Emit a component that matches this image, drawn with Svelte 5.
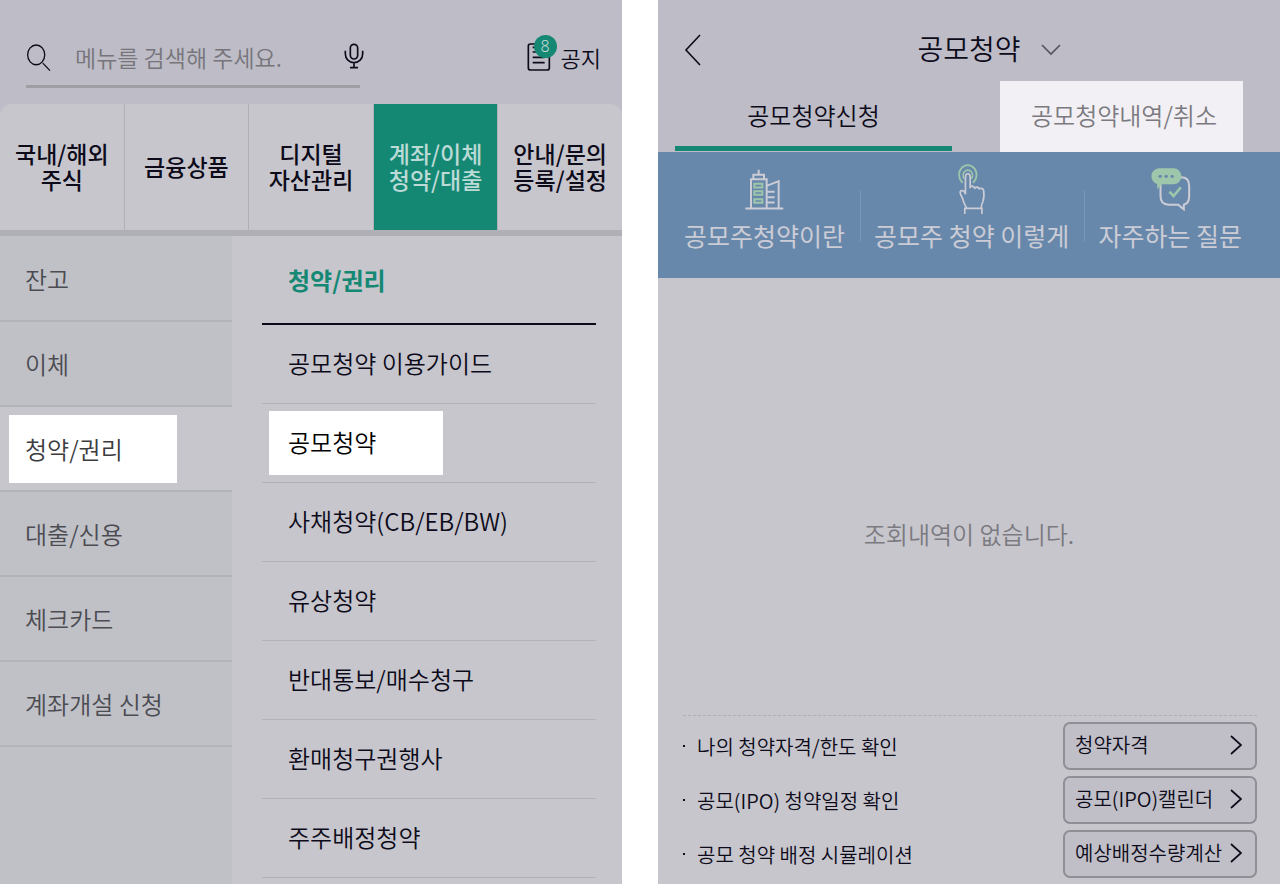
<script lang="ts">
  const categories: { label: string; active?: boolean }[] = [
    { label: '국내/해외\n주식' },
    { label: '금융상품' },
    { label: '디지털\n자산관리' },
    { label: '계좌/이체\n청약/대출', active: true },
    { label: '안내/문의\n등록/설정' },
  ];

  const groups = ['잔고', '이체', '청약/권리', '대출/신용', '체크카드', '계좌개설 신청'];

  const menus = [
    '공모청약 이용가이드',
    '공모청약',
    '사채청약(CB/EB/BW)',
    '유상청약',
    '반대통보/매수청구',
    '환매청구권행사',
    '주주배정청약',
  ];

  const links: { text: string; button: string }[] = [
    { text: '나의 청약자격/한도 확인', button: '청약자격' },
    { text: '공모(IPO) 청약일정 확인', button: '공모(IPO)캘린더' },
    { text: '공모 청약 배정 시뮬레이션', button: '예상배정수량계산' },
  ];

  let query = $state('');
  let group = $state('청약/권리');
  let menu = $state('공모청약');
</script>

<div class="page">
  <section class="phone">
    <header class="search-bar">
      <div class="search">
        <svg class="icon-search" viewBox="76 72 76 86" aria-hidden="true">
          <ellipse cx="107" cy="107" rx="26" ry="30" />
          <path d="M127 132L149 155" />
        </svg>
        <input type="text" aria-label="메뉴 검색" placeholder="메뉴를 검색해 주세요." bind:value={query} />
      </div>
      <button class="mic" aria-label="음성 검색">
        <svg viewBox="103 72 60 78" aria-hidden="true">
          <rect x="122" y="76" width="22" height="44" rx="11" />
          <path d="M107 95v10a26 26 0 0 0 52 0V95M133 131v15M121 146h24" />
        </svg>
      </button>
      <button class="notice">
        <span class="notice-icon">
          <svg viewBox="654 70 70 84" aria-hidden="true">
            <rect x="657" y="73" width="63" height="78" rx="6" />
            <path d="M670 83h12M670 97h14M670 113h36M670 129h36" />
          </svg>
          <span class="badge">8</span>
        </span>
        공지
      </button>
    </header>

    <nav class="categories">
      {#each categories as category}
        <button class:active={category.active}>{category.label}</button>
      {/each}
    </nav>

    <div class="menu">
      <nav class="groups">
        {#each groups as name}
          <button class:selected={group === name} onclick={() => (group = name)}>
            <span>{name}</span>
          </button>
        {/each}
      </nav>
      <div class="items">
        <h2>청약/권리</h2>
        {#each menus as name}
          <button class:selected={menu === name} onclick={() => (menu = name)}>
            <span>{name}</span>
          </button>
        {/each}
      </div>
    </div>
  </section>

  <section class="phone">
    <header class="title-bar">
      <button class="back" aria-label="뒤로">
        <svg viewBox="0 0 18 32" aria-hidden="true"><path d="M16 1L2 16l14 15" /></svg>
      </button>
      <button class="title">
        <h1>공모청약</h1>
        <svg viewBox="0 0 20 12" aria-hidden="true"><path d="M1 1l9 9 9-9" /></svg>
      </button>
    </header>

    <div class="tabs" role="tablist">
      <button class="tab current" role="tab" aria-selected="true">공모청약신청</button>
      <button class="tab history" role="tab" aria-selected="false">공모청약내역/취소</button>
    </div>

    <nav class="guide">
      <a href="#about">
        <span class="guide-icon">
          <svg class="building" viewBox="276 54 117 122" aria-hidden="true">
            <path d="M317 56v14M301 83V71h32v12M294 171V84h47v87M341 104l36-14v81M342 122h23M342 138h23M342 154h23M277 172h114" />
            <path class="green" d="M304 98h24v11h-24zM304 120h24v11h-24zM304 144h24v11h-24z" />
          </svg>
        </span>
        공모주청약이란
      </a>
      <a href="#howto">
        <span class="guide-icon">
          <svg class="touch" viewBox="908 40 86 152" aria-hidden="true">
            <path class="green" d="M925 96a26 29 0 1 1 30 0" />
            <path class="green" d="M929 84a14 16 0 1 1 22 0" />
            <path d="M933 130V78q0-9 7-9t7 9v34V108q8-5 14 4q7-7 13 2q8-5 13 4q3 20-2 34q-5 8-5 20M933 130q-4-14-14-10q-4 4 1 14q5 8 8 20q3 8 8 16M931 189v-17h51v17" />
          </svg>
        </span>
        공모주 청약 이렇게
      </a>
      <a href="#faq">
        <span class="guide-icon">
          <svg class="chat" viewBox="556 48 122 132" aria-hidden="true">
            <path d="M648 79q25 0 25 25v32q0 22-16 25v14l-17-14h-28q-25 0-25-25v-36" />
            <path class="bubble" d="M582 52h44a24 24 0 0 1 0 48h-34l-15 15V99a24 24 0 0 1 5-47z" />
            <circle cx="586" cy="76" r="5" />
            <circle cx="604" cy="76" r="5" />
            <circle cx="622" cy="76" r="5" />
            <path class="check" d="M614 122l12 13 22-26" />
          </svg>
        </span>
        자주하는 질문
      </a>
    </nav>

    <p class="empty">조회내역이 없습니다.</p>

    <ul class="links">
      {#each links as link}
        <li>
          <span class="link-text">{link.text}</span>
          <button>
            {link.button}
            <svg viewBox="0 0 12 20" aria-hidden="true"><path d="M1 1l10 9-10 9" /></svg>
          </button>
        </li>
      {/each}
    </ul>
  </section>
</div>

<style>
  :global(body) {
    margin: 0;
    background: #fff;
  }

  .page {
    display: flex;
    gap: 36px;
    min-height: 100vh;
    font-family: 'Noto Sans CJK KR', sans-serif;
    font-size: 24px;
    font-weight: 350;
    line-height: 36px;
    color: #0d0b1a;
  }

  .phone {
    flex: 1;
    min-width: 0;
    display: flex;
    flex-direction: column;
    background: #c7c6cd;
  }

  button {
    padding: 0;
    border: none;
    background: none;
    color: inherit;
    font: inherit;
    cursor: pointer;
  }

  svg {
    display: block;
    flex: none;
    fill: none;
    stroke: #0d0b1a;
  }

  /* search */
  .search-bar {
    display: flex;
    align-items: center;
    height: 104px;
    padding: 0 21px 0 26px;
    box-sizing: border-box;
    background: #bebcc6;
  }

  .search {
    display: flex;
    align-items: center;
    width: 334px;
    height: 56px;
    margin-top: 13px;
    border-bottom: 3px solid #9f9ea5;
  }

  .icon-search {
    width: 25px;
    height: 29px;
    stroke-width: 4;
  }

  .search input {
    flex: 1;
    min-width: 0;
    height: 36px;
    padding: 0 16px 0 24px;
    border: none;
    outline: none;
    background: none;
    font: inherit;
    font-size: 23px;
    color: inherit;
  }

  .search input::placeholder {
    color: #76757b;
    opacity: 1;
  }

  .mic {
    margin-left: -16px;
    padding-top: 8px;
  }

  .mic svg {
    width: 20px;
    height: 26px;
    stroke-width: 5;
  }

  .notice {
    display: flex;
    align-items: center;
    gap: 10px;
    height: 60px;
    margin-left: auto;
    padding-top: 10px;
    font-size: 22px;
  }

  .notice-icon {
    position: relative;
  }

  .notice-icon svg {
    width: 24px;
    height: 28px;
    stroke-width: 5;
  }

  .badge {
    position: absolute;
    top: -8px;
    left: 7px;
    width: 23px;
    height: 23px;
    border-radius: 50%;
    background: #158874;
    color: #c7dcd9;
    font-family: 'Noto Sans', sans-serif;
    font-size: 16px;
    line-height: 23px;
    text-align: center;
  }

  /* categories */
  .categories {
    display: flex;
    height: 126px;
    border-bottom: 6px solid #b0afb6;
    background: linear-gradient(#bebcc6 20px, #c7c6cd 20px);
  }

  .categories button {
    flex: 1;
    padding-bottom: 2px;
    border-right: 1px solid #b1b0b7;
    background: #c7c6cd;
    font-size: 23px;
    font-weight: 500;
    line-height: 26px;
    white-space: pre;
  }

  .categories button:first-child {
    border-top-left-radius: 12px;
  }

  .categories button:last-child {
    border-right: none;
    border-top-right-radius: 12px;
  }

  .categories button.active {
    background: #158874;
    color: #bcdad6;
  }

  /* menu */
  .menu {
    flex: 1;
    display: flex;
  }

  .groups {
    width: 232px;
    padding-top: 1px;
    background: #c0c1c7;
    color: #4c4c52;
  }

  .groups button {
    display: flex;
    align-items: center;
    width: 100%;
    height: 85px;
    padding: 1px 9px 0;
    border-bottom: 2px solid #b3b3b9;
    box-sizing: border-box;
    text-align: left;
  }

  .groups span {
    min-width: 136px;
    padding: 16px;
  }

  .groups .selected {
    background: #c7c6cd;
  }

  .groups .selected span {
    background: #fff;
    color: #3c3c3f;
  }

  .items {
    flex: 1;
    padding: 0 26px 0 30px;
  }

  .items h2 {
    height: 87px;
    margin: 0;
    padding-left: 26px;
    border-bottom: 2px solid #0d0b1a;
    color: #158874;
    font-size: 24px;
    font-weight: 700;
    line-height: 88px;
  }

  .items button {
    display: flex;
    align-items: center;
    width: 100%;
    height: 79px;
    padding: 0 7px;
    border-bottom: 1px solid #b3b2b9;
    box-sizing: border-box;
    text-align: left;
  }

  .items span {
    min-width: 136px;
    padding: 13px 19px 15px;
  }

  .items .selected span {
    background: #fff;
    color: #000;
  }

  /* title */
  .title-bar {
    display: flex;
    align-items: center;
    height: 81px;
    padding: 18px 26px 0;
    box-sizing: border-box;
    background: #bebcc6;
  }

  .back svg {
    width: 18px;
    height: 32px;
    stroke-width: 1.6;
  }

  .title {
    display: flex;
    align-items: center;
    gap: 20px;
    margin: 0 auto;
    padding: 0 0 4px 22px;
  }

  .title h1 {
    margin: 0;
    font-size: 28px;
    font-weight: 350;
    line-height: 40px;
  }

  .title svg {
    width: 20px;
    height: 12px;
    padding-top: 4px;
    stroke: #55545e;
    stroke-width: 1.6;
  }

  /* tabs */
  .tabs {
    display: flex;
    justify-content: space-between;
    height: 71px;
    padding: 0 37px 0 17px;
    background: #bebcc6;
  }

  .tab.current {
    width: 277px;
    margin-bottom: 1px;
    padding-top: 3px;
    border-bottom: 5px solid #158874;
  }

  .tab.history {
    width: 243px;
    padding: 0 0 4px 5px;
    background: #f2f0f4;
    color: #7b7a80;
  }

  /* guide */
  .guide {
    display: flex;
    justify-content: space-between;
    height: 126px;
    padding: 0 24px 0 12px;
    box-sizing: border-box;
    background: #6888ab;
  }

  .guide a {
    position: relative;
    padding: 11px 14px 0;
    color: #cbccd5;
    font-size: 25px;
    font-weight: 400;
    text-align: center;
    text-decoration: none;
    white-space: nowrap;
  }

  .guide a + a::before {
    content: '';
    position: absolute;
    top: 38px;
    left: 0;
    width: 1px;
    height: 52px;
    background: #7f97b7;
  }

  .guide-icon {
    display: flex;
    align-items: center;
    justify-content: center;
    height: 52px;
    margin-bottom: 2px;
  }

  .guide svg {
    stroke: #cbccd5;
    stroke-width: 6;
  }

  .guide .building {
    width: 39px;
    height: 41px;
  }

  .guide .touch {
    width: 29px;
    height: 51px;
    stroke-width: 5;
  }

  .guide .chat {
    width: 41px;
    height: 44px;
  }

  .guide .green {
    stroke: #9dc6ab;
  }

  .guide .bubble {
    fill: #9dc6ab;
    stroke: none;
  }

  .guide circle {
    fill: #6888ab;
    stroke: none;
  }

  .guide .check {
    stroke: #9dc6ab;
    stroke-width: 8;
  }

  .empty {
    flex: 1;
    display: flex;
    align-items: center;
    justify-content: center;
    margin: 0;
    padding-top: 74px;
    color: #7b7a80;
  }

  /* links */
  .links {
    display: flex;
    flex-direction: column;
    gap: 6px;
    margin: 0 23px 0 25px;
    padding: 6px 0;
    border-top: 1px dashed #afaeb5;
    list-style: none;
    font-size: 20px;
  }

  .links li {
    display: flex;
    align-items: center;
    height: 48px;
  }

  .links li::before {
    content: '';
    width: 2px;
    height: 2px;
    margin-right: 12px;
    background: #0d0b1a;
  }

  .link-text {
    flex: 1;
    padding-top: 2px;
  }

  .links button {
    display: flex;
    align-items: center;
    justify-content: space-between;
    width: 194px;
    height: 48px;
    padding: 0 13px 2px 10px;
    border: 2px solid #908f96;
    border-radius: 7px;
    box-sizing: border-box;
    background: #c0bfc8;
    white-space: nowrap;
  }

  .links svg {
    width: 12px;
    height: 20px;
    stroke-width: 1.7;
  }
</style>
